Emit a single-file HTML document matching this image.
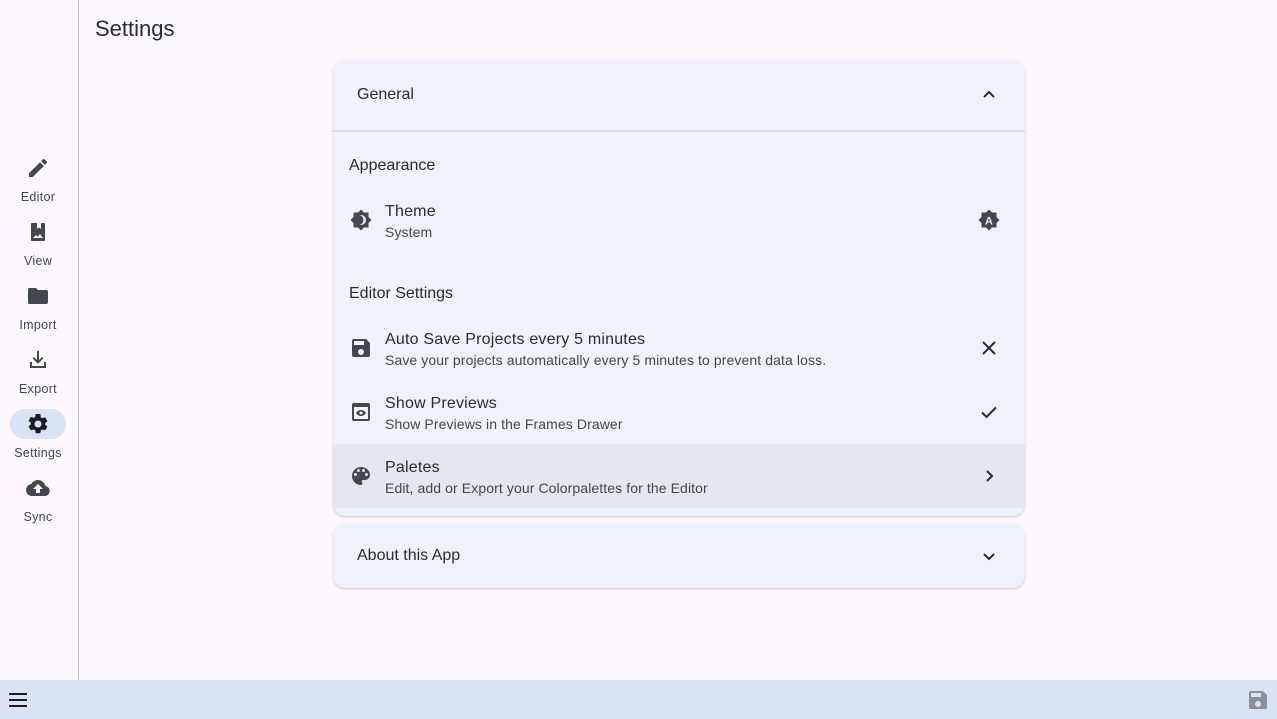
<!DOCTYPE html>
<html><head><meta charset="utf-8"><style>
*{box-sizing:border-box;margin:0;padding:0}
body{width:1277px;height:719px;overflow:hidden;background:#fcf8fd;font-family:"Liberation Sans",sans-serif;color:#1b1c20;position:relative}
.side{position:absolute;left:0;top:0;width:79px;height:680px;border-right:1px solid #c4c6cf}
.nav{position:absolute;left:0;width:76px;text-align:center;font-size:12.5px;color:#44474e;letter-spacing:.3px}
.nav .ic{width:56px;height:30px;margin:0 auto 7px;border-radius:15px;display:flex;align-items:center;justify-content:center}
.nav.sel .ic{background:#d8e3f7}
h1{position:absolute;left:95px;top:16px;font-size:22px;font-weight:400;color:#2a2c33}
.card{position:absolute;left:333px;width:692px;background:#eff2fa;border-radius:12px;box-shadow:0 1px 2px rgba(0,0,0,.2)}
.hdr{height:70px;display:flex;align-items:center;padding:0 24px;font-size:16px;justify-content:space-between;color:#2a2c33}
.sec{position:absolute;left:16px;font-size:16px;color:#2a2c33}
.row{position:absolute;left:0;width:692px;height:64px;display:flex;align-items:center;padding:0 24px 0 16px}
.row .t{margin-left:12px;flex:1;padding-top:3px}
.row .t b{display:block;font-weight:400;font-size:16px;color:#2a2c33;letter-spacing:.2px}
.row .t span{display:block;font-size:14px;color:#44474e;margin-top:3px;letter-spacing:.1px}
.bar{position:absolute;left:0;top:680px;width:1277px;height:39px;background:#d9e3f5}
svg{display:block}
</style></head><body>
<div class="side">
 <div class="nav" style="top:153px"><div class="ic"><svg width="24" height="24" viewBox="0 0 24 24"><path fill="#44474e" d="M3 17.25V21h3.75L17.81 9.94l-3.75-3.75L3 17.250zM20.71 7.04a1 1 0 000-1.41l-2.34-2.34a1 1 0 00-1.41 0l-1.83 1.83 3.75 3.75 1.83-1.83z"/></svg></div>Editor</div>
 <div class="nav" style="top:217px"><div class="ic"><svg width="24" height="24" viewBox="0 0 24 24"><path fill="#44474e" d="M6 3h12a1 1 0 011 1v16a1 1 0 01-1 1H6a1 1 0 01-1-1V4a1 1 0 011-1zm5 0v6l2-1.5L15 9V3zM7 18h10l-3-4-2.5 3-1.5-2z"/></svg></div>View</div>
 <div class="nav" style="top:281px"><div class="ic"><svg width="24" height="24" viewBox="0 0 24 24"><path fill="#44474e" d="M10 4H4a2 2 0 00-2 2v12a2 2 0 002 2h16a2 2 0 002-2V8a2 2 0 00-2-2h-8l-2-2z"/></svg></div>Import</div>
 <div class="nav" style="top:345px"><div class="ic"><svg width="24" height="24" viewBox="0 0 24 24"><path fill="#44474e" d="M11 3h2v9l3-3 1.4 1.4L12 15.8l-5.4-5.4L8 9l3 3zM4 14h2v4h12v-4h2v6H4z"/></svg></div>Export</div>
 <div class="nav sel" style="top:409px"><div class="ic"><svg width="24" height="24" viewBox="0 0 24 24"><path fill="#1b1c20" d="M19.14 12.94a7 7 0 000-1.88l2.03-1.58a.5.5 0 00.12-.61l-1.92-3.32a.5.5 0 00-.59-.22l-2.39.96a7 7 0 00-1.62-.94l-.36-2.54A.5.5 0 0013.920 2h-3.84a.5.5 0 00-.49.42l-.36 2.54a7 7 0 00-1.62.94l-2.39-.96a.5.5 0 00-.59.22L2.71 8.48a.5.5 0 00.12.61l2.03 1.58a7 7 0 000 1.880l-2.03 1.58a.5.5 0 00-.12.61l1.92 3.32c.12.22.37.29.59.22l2.39-.96c.5.38 1.04.7 1.62.94l.36 2.54c.05.24.25.42.49.42h3.84c.24 0 .44-.18.49-.42l.36-2.54a7 7 0 001.62-.94l2.39.96c.22.08.47 0 .59-.22l1.92-3.32a.5.5 0 00-.12-.61zM12 15.5A3.5 3.5 0 1112 8.5a3.5 3.5 0 010 7z"/></svg></div>Settings</div>
 <div class="nav" style="top:473px"><div class="ic"><svg width="24" height="24" viewBox="0 0 24 24"><path fill="#44474e" d="M19.35 10.04A7.49 7.49 0 0012 4a7.5 7.5 0 00-6.65 4.04A6 6 0 006 20h13a5 5 0 00.35-9.96zM14 13v4h-4v-4H7l5-5 5 5z"/></svg></div>Sync</div>
</div>
<h1>Settings</h1>
<div class="card" style="top:60px;height:456px">
 <div class="hdr">General<svg width="24" height="24" viewBox="0 0 24 24"><path fill="none" stroke="#2a2c33" stroke-width="2" d="M7 14l5-5 5 5"/></svg></div>
 <div style="height:2px;background:#d8dbe3"></div>
 <div class="sec" style="top:97px">Appearance</div>
 <div class="row" style="top:128px"><svg width="24" height="24" viewBox="0 0 24 24"><path fill="#44474e" d="M12 1.5l3 3h4.5v4.5l3 3-3 3v4.5H15l-3 3-3-3H4.5V15l-3-3 3-3V4.5H9z"/><circle cx="12" cy="12" r="5" fill="#eff2fa"/><circle cx="9.5" cy="12" r="5" fill="#44474e"/></svg><div class="t"><b>Theme</b><span>System</span></div><svg width="24" height="24" viewBox="0 0 24 24"><path fill="#44474e" d="M12 1.5l3 3h4.5v4.5l3 3-3 3v4.5H15l-3 3-3-3H4.5V15l-3-3 3-3V4.5H9z"/><text x="12" y="16.5" text-anchor="middle" font-size="11" font-weight="bold" fill="#eff2fa" font-family="Liberation Sans">A</text></svg></div>
 <div class="sec" style="top:225px">Editor Settings</div>
 <div class="row" style="top:256px"><svg width="24" height="24" viewBox="0 0 24 24"><path fill="#44474e" d="M17 3H5a2 2 0 00-2 2v14a2 2 0 002 2h14a2 2 0 002-2V7zm-5 16a3 3 0 110-6 3 3 0 010 6zm3-10H5V5h10z"/></svg><div class="t"><b>Auto Save Projects every 5 minutes</b><span>Save your projects automatically every 5 minutes to prevent data loss.</span></div><svg width="24" height="24" viewBox="0 0 24 24"><path stroke="#2a2c33" stroke-width="2" d="M6 6l12 12M18 6L6 18"/></svg></div>
 <div class="row" style="top:320px"><svg width="24" height="24" viewBox="0 0 24 24"><path fill="#44474e" d="M19 3H5a2 2 0 00-2 2v14a2 2 0 002 2h14a2 2 0 002-2V5a2 2 0 00-2-2zm0 16H5V7h14zm-7-9c-2.2 0-4 1.3-5 3 1 1.7 2.8 3 5 3s4-1.3 5-3c-1-1.7-2.8-3-5-3zm0 4.5a1.5 1.5 0 110-3 1.5 1.5 0 010 3z"/></svg><div class="t"><b>Show Previews</b><span>Show Previews in the Frames Drawer</span></div><svg width="24" height="24" viewBox="0 0 24 24"><path fill="none" stroke="#2a2c33" stroke-width="2" d="M5 12.5l4.5 4.5L19 7.5"/></svg></div>
 <div class="row" style="top:384px;background:#e4e7ef"><svg width="24" height="24" viewBox="0 0 24 24"><path fill="#44474e" d="M12 3a9 9 0 000 18 1.5 1.5 0 001.1-2.5 1.5 1.5 0 011.1-2.5H16a5 5 0 005-5c0-4.4-4-8-9-8zM6.5 12a1.5 1.5 0 110-3 1.5 1.5 0 010 3zm3-4a1.5 1.5 0 110-3 1.5 1.5 0 010 3zm5 0a1.5 1.5 0 110-3 1.5 1.5 0 010 3zm3 4a1.5 1.5 0 110-3 1.5 1.5 0 010 3z"/></svg><div class="t"><b>Paletes</b><span>Edit, add or Export your Colorpalettes for the Editor</span></div><svg width="24" height="24" viewBox="0 0 24 24"><path fill="none" stroke="#2a2c33" stroke-width="2" d="M10 7l5 5-5 5"/></svg></div>
</div>
<div class="card" style="top:524px;height:64px">
 <div class="hdr" style="height:64px">About this App<svg width="24" height="24" viewBox="0 0 24 24"><path fill="none" stroke="#2a2c33" stroke-width="2" d="M7 10l5 5 5-5"/></svg></div>
</div>
<div class="bar">
 <svg style="position:absolute;left:6px;top:8px" width="24" height="24" viewBox="0 0 24 24"><path stroke="#1b1c20" stroke-width="2" d="M3 6h18M3 12h18M3 18h18"/></svg>
 <svg style="position:absolute;left:1246px;top:8px" width="24" height="24" viewBox="0 0 24 24"><path fill="#8a8f99" d="M17 3H5a2 2 0 00-2 2v14a2 2 0 002 2h14a2 2 0 002-2V7zm-5 16a3 3 0 110-6 3 3 0 010 6zm3-10H5V5h10z"/></svg>
</div>
</body></html>
